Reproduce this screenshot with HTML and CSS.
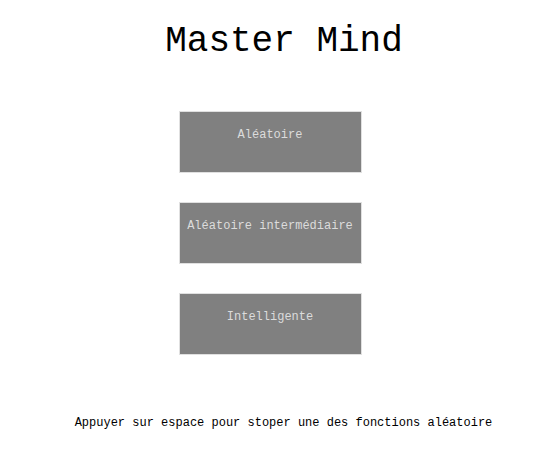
FILE: index.html
```html
<!DOCTYPE html>
<html lang="fr">
<head>
<meta charset="utf-8">
<title>Master Mind</title>
<link rel="stylesheet" href="styles.css">
</head>
<body>
<main class="page">
  <h1 class="title">Master Mind</h1>
  <div class="menu">
    <button class="mode">Aléatoire</button>
    <button class="mode">Aléatoire intermédiaire</button>
    <button class="mode">Intelligente</button>
  </div>
  <p class="hint">Appuyer sur espace pour stoper une des fonctions aléatoire</p>
</main>
</body>
</html>
```

FILE: styles.css
```css
html, body {
  margin: 0;
  padding: 0;
  background: #ffffff;
}
body {
  font-family: "Courier New", Courier, "Nimbus Mono PS", "Liberation Mono", monospace;
  color: #000;
}
.page {
  display: flex;
  flex-direction: column;
  align-items: center;
  width: 546px;
}
.title {
  margin: 20px 0 0 22px;
  font-size: 36px;
  font-weight: normal;
  line-height: 44px;
}
.menu {
  display: flex;
  flex-direction: column;
  gap: 30px;
  margin-top: 47px;
  margin-left: -6px;
}
.mode {
  width: 183px;
  height: 62px;
  box-sizing: border-box;
  border: 1px solid #e0e0e0;
  background: #808080;
  color: #dcdcdc;
  font-family: inherit;
  font-size: 12px;
  line-height: 14px;
  padding: 16px 0 0;
  display: flex;
  justify-content: center;
  align-items: flex-start;
}
.mode + .mode {
  margin-top: -1px;
}
.hint {
  margin: 61px 0 0 21px;
  font-size: 12px;
  line-height: 14px;
}
```
